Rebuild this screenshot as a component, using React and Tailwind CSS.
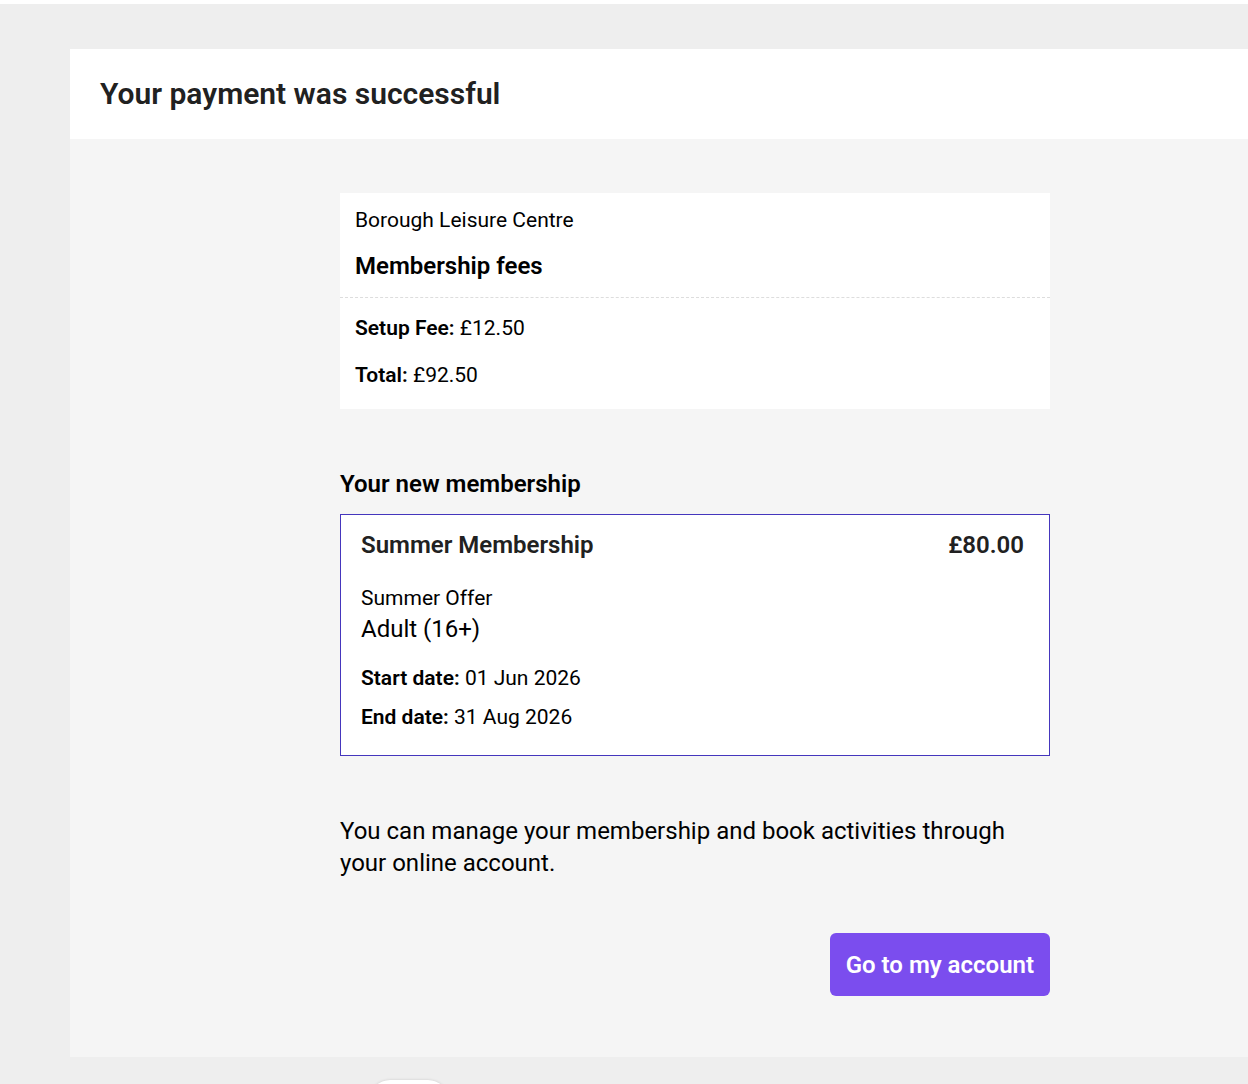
import React from "react";

const font = { fontFamily: "Roboto, 'Liberation Sans', sans-serif" };

const App = () => {
  return (
    <div className="min-h-[1084px] w-full bg-[#eeeeee] overflow-hidden" style={font}>
      <div className="h-[4px] bg-white" />
      <div className="pt-[45px] pl-[70px]">
        <div className="w-full">
          {/* Header */}
          <div className="h-[90px] bg-white flex items-center px-[30px]">
            <h1 className="text-[30px] font-semibold text-[#212121] leading-[36px]">
              Your payment was successful
            </h1>
          </div>

          {/* Body */}
          <div className="bg-[#f5f5f5] pt-[54px] pb-[61px] pl-[270px]">
            <div className="w-[710px] text-black">
              {/* Fee summary */}
              <div className="bg-white">
                <div className="px-[15px] pt-[14px] pb-[16px] border-b border-dashed border-[#dddddd]">
                  <p className="text-[21px] leading-[26px]">Borough Leisure Centre</p>
                  <h2 className="mt-[18px] text-[24px] leading-[30px] font-semibold">Membership fees</h2>
                </div>
                <div className="px-[15px] pt-[17px] pb-[21px] text-[21px] leading-[26px]">
                  <p>
                    <span className="font-semibold">Setup Fee:</span> £12.50
                  </p>
                  <p className="mt-[21px]">
                    <span className="font-semibold">Total:</span> £92.50
                  </p>
                </div>
              </div>

              <h2 className="mt-[60px] text-[24px] leading-[30px] font-semibold">Your new membership</h2>

              {/* Membership card */}
              <div className="mt-[15px] bg-white border border-[#4536bd] pl-[20px] pr-[25px] pt-[15px] pb-[25px] text-[#212121]">
                <div className="flex justify-between items-center">
                  <h3 className="text-[24px] leading-[30px] font-semibold">Summer Membership</h3>
                  <span className="text-[24px] leading-[30px] font-semibold">£80.00</span>
                </div>
                <p className="mt-[25px] text-[21px] leading-[26px] text-black">Summer Offer</p>
                <p className="mt-[3px] text-[24px] leading-[30px] text-black">Adult (16+)</p>
                <p className="mt-[21px] text-[21px] leading-[26px] text-black">
                  <span className="font-semibold">Start date:</span> 01 Jun 2026
                </p>
                <p className="mt-[13px] text-[21px] leading-[26px] text-black">
                  <span className="font-semibold">End date:</span> 31 Aug 2026
                </p>
              </div>

              <p className="mt-[59px] text-[24px] leading-[32px]">
                You can manage your membership and book activities through your online account.
              </p>

              <div className="mt-[54px] flex justify-end">
                <button className="h-[63px] px-[16px] rounded-[6px] bg-[#7b4dee] text-white text-[24px] font-semibold">
                  Go to my account
                </button>
              </div>
            </div>
          </div>
        </div>

        <div className="mt-[23px] ml-[300px] w-[78px] h-[20px] bg-white rounded-t-[20px] shadow-[0_0_3px_rgba(0,0,0,0.15)]" />
      </div>
    </div>
  );
};

export default App;
